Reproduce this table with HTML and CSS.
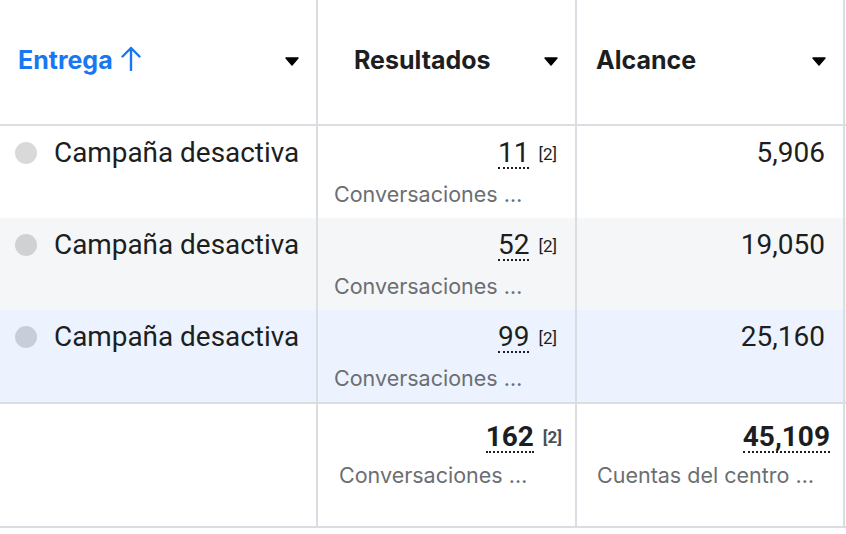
FILE: index.html
```html
<!DOCTYPE html>
<html lang="es">
<head>
<meta charset="utf-8">
<title>Campañas</title>
<link rel="stylesheet" href="styles.css">
</head>
<body>
<div class="table">
  <div class="row head">
    <div class="cell hcell c1">
      <span class="htitle sorted">Entrega
        <svg class="arrow" width="22" height="26" viewBox="0 0 22 26"><path d="M11 25V3M2.5 11.5L11 3l8.5 8.5" fill="none" stroke="#1877f2" stroke-width="2.4" stroke-linecap="round" stroke-linejoin="round"/></svg>
      </span>
      <svg class="caret" width="14" height="9" viewBox="0 0 14 9"><path d="M1 1h12L7 8z" fill="#000" stroke="#000" stroke-width="1.4" stroke-linejoin="round"/></svg>
    </div>
    <div class="cell hcell c2">
      <span class="htitle">Resultados</span>
      <svg class="caret" width="14" height="9" viewBox="0 0 14 9"><path d="M1 1h12L7 8z" fill="#000" stroke="#000" stroke-width="1.4" stroke-linejoin="round"/></svg>
    </div>
    <div class="cell hcell c3">
      <span class="htitle">Alcance</span>
      <svg class="caret" width="14" height="9" viewBox="0 0 14 9"><path d="M1 1h12L7 8z" fill="#000" stroke="#000" stroke-width="1.4" stroke-linejoin="round"/></svg>
    </div>
  </div>

  <div class="row data">
    <div class="cell name"><span class="dot"></span><span class="label">Campaña desactiva</span></div>
    <div class="cell num c2"><div class="line"><span class="val">11</span><span class="sup">[2]</span></div><div class="sub">Conversaciones …</div></div>
    <div class="cell num c3"><div class="line"><span class="plain">5,906</span></div></div>
  </div>

  <div class="row data alt">
    <div class="cell name"><span class="dot"></span><span class="label">Campaña desactiva</span></div>
    <div class="cell num c2"><div class="line"><span class="val">52</span><span class="sup">[2]</span></div><div class="sub">Conversaciones …</div></div>
    <div class="cell num c3"><div class="line"><span class="plain">19,050</span></div></div>
  </div>

  <div class="row data hover">
    <div class="cell name"><span class="dot"></span><span class="label">Campaña desactiva</span></div>
    <div class="cell num c2"><div class="line"><span class="val">99</span><span class="sup">[2]</span></div><div class="sub">Conversaciones …</div></div>
    <div class="cell num c3"><div class="line"><span class="plain">25,160</span></div></div>
  </div>

  <div class="row total">
    <div class="cell"></div>
    <div class="cell num c2"><div class="line"><span class="val">162</span><span class="sup">[2]</span></div><div class="sub">Conversaciones …</div></div>
    <div class="cell num c3"><div class="line"><span class="val">45,109</span></div><div class="sub">Cuentas del centro …</div></div>
  </div>
</div>
</body>
</html>
```

FILE: styles.css
```css
* { box-sizing: border-box; }

html, body {
  margin: 0;
  padding: 0;
  background: #fff;
}

body {
  font-family: Roboto, "Liberation Sans", sans-serif;
  color: #1c1e21;
}

.table {
  width: 846px;
}

.row {
  display: grid;
  grid-template-columns: 318px 259px 268px;
}

.cell {
  border-right: 2px solid #dadde1;
  min-width: 0;
}

/* header */
.head {
  height: 126px;
  border-bottom: 2px solid #dadde1;
}

.hcell {
  display: flex;
  align-items: center;
  justify-content: space-between;
  padding-right: 17px;
  padding-bottom: 4px;
}

.hcell.c1 { padding-left: 18px; }
.hcell.c2 { padding-left: 36px; }
.hcell.c3 { padding-left: 19px; }

.htitle {
  font-family: Inter, Roboto, sans-serif;
  font-size: 25px;
  font-weight: 700;
  color: #1c1e21;
  display: flex;
  align-items: center;
}

.htitle.sorted {
  color: #1877f2;
}

.arrow {
  margin-left: 7px;
  margin-top: -4px;
}

.caret {
  display: block;
  margin-top: 2px;
}

/* data rows */
.data {
  height: 92px;
}

.alt { background: #f5f6f7; }
.hover { background: #ecf3ff; }

.name {
  display: flex;
  align-items: flex-start;
  padding: 10px 0 0 15px;
}

.dot {
  width: 22px;
  height: 22px;
  border-radius: 50%;
  background: rgba(0, 0, 0, 0.15);
  margin-top: 6px;
  flex: none;
}

.label {
  margin-left: 17px;
  font-size: 27.9px;
  line-height: 34px;
  white-space: nowrap;
}

.num {
  padding-top: 10px;
}

.line {
  text-align: right;
  padding-right: 18px;
  font-size: 28px;
  line-height: 34px;
  white-space: nowrap;
}

.val {
  display: inline-block;
  line-height: 1;
  border-bottom: 2px dotted #1c1e21;
}

.sup {
  display: inline-block;
  vertical-align: top;
  font-size: 17px;
  line-height: 17px;
  margin-top: 10px;
  margin-left: 9px;
}

.sub {
  font-family: Inter, Roboto, sans-serif;
  margin-top: 11px;
  font-size: 21.5px;
  line-height: 26px;
  color: #6b6e73;
  white-space: nowrap;
}

.data .c2 .sub { padding-left: 16px; }

/* total row */
.total {
  height: 126px;
  border-top: 2px solid #dadde1;
  border-bottom: 2px solid #dadde1;
}

.total .num {
  padding-top: 16px;
}

.total .line {
  padding-right: 13px;
  font-size: 28px;
  font-weight: 700;
}

.total .sup {
  font-weight: 700;
  color: #4b4f56;
  margin-top: 9px;
}

.total .sub {
  margin-top: 8px;
}

.total .c2 .sub { padding-left: 21px; }
.total .c3 .sub { padding-left: 20px; }
```
